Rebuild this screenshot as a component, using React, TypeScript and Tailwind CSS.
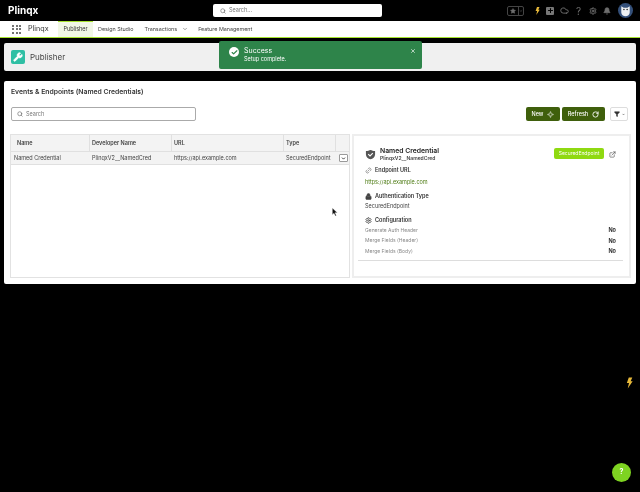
import type { ReactNode } from "react";
import { Search, Check, X, ChevronDown, Star, Plus, Cloud, Settings, Bell, Link2, Lock, ExternalLink, RotateCw, Filter, Wrench, Sparkle } from "lucide-react";

const F = "font-['Inter',sans-serif]";

function Bolt({ className }: { className: string }) {
  return (
    <svg viewBox="0 0 10 16" className={className} fill="#e8b93a">
      <path d="M4 0h5L6.600 5.500H9.500L2.500 16l1.800-8H1.200z" />
    </svg>
  );
}

function Owl() {
  return (
    <svg viewBox="0 0 16 16" className="w-[15px] h-[15px]">
      <circle cx="8" cy="8" r="8" fill="#34507a" />
      <path d="M3.500 3.500l2.500 1.500h4l2.500-1.500v6.500c0 2.200-2.200 4.200-4.500 4.200S3.500 12.200 3.500 10z" fill="#eef0f2" />
      <circle cx="6.300" cy="7" r="0.800" fill="#222" />
      <circle cx="9.700" cy="7" r="0.800" fill="#222" />
    </svg>
  );
}

function TopBar() {
  return (
    <header className="h-[21px] bg-black flex items-center pl-2 pr-[7px] shrink-0">
      <span className="text-white font-bold text-[10px] w-[205px]">Plinqx</span>
      <div className="w-[169px] h-[13px] bg-white rounded-[2px] flex items-center pl-[7px] gap-[3px]">
        <Search className="w-[6px] h-[6px] text-[#666]" strokeWidth={2.500} />
        <span className="text-[5.500px] text-[#777]">Search...</span>
      </div>
      <div className="ml-auto flex items-center">
        <div className="w-[17px] h-[10px] border border-[#444] rounded-[2px] flex items-center">
          <div className="w-[11px] flex justify-center border-r border-[#444] h-full items-center">
            <Star className="w-[6px] h-[6px] text-[#6e6e6e] fill-[#6e6e6e]" />
          </div>
          <ChevronDown className="w-[4px] h-[4px] text-[#6e6e6e] ml-[0.500px]" strokeWidth={3} />
        </div>
        <Bolt className="w-[5px] h-[8px] ml-[11px]" />
        <div className="w-[8px] h-[8px] bg-[#777] rounded-[1px] ml-[6px] flex items-center justify-center">
          <Plus className="w-[7px] h-[7px] text-black" strokeWidth={3.500} />
        </div>
        <Cloud className="w-[9px] h-[9px] text-[#6e6e6e] ml-[6px]" strokeWidth={2.500} />
        <span className="text-[10px] leading-none text-[#6e6e6e] ml-[7px] w-[6px]">?</span>
        <Settings className="w-[8px] h-[8px] text-[#6e6e6e] ml-[7px]" strokeWidth={3} />
        <Bell className="w-[8px] h-[8px] text-[#6e6e6e] fill-[#6e6e6e] ml-[6px]" />
        <div className="ml-[7px]"><Owl /></div>
      </div>
    </header>
  );
}

function NavBar() {
  const dots = Array.from({ length: 9 });
  return (
    <nav className="h-[17px] bg-white border-b-[1.500px] border-[#a6e22e] flex items-stretch shrink-0">
      <div className="grid grid-cols-3 gap-[1.500px] w-[9px] h-[9px] ml-[12px] self-center">
        {dots.map((_, i) => (
          <span key={i} className="w-[2px] h-[2px] bg-[#444] rounded-full" />
        ))}
      </div>
      <span className="ml-[7px] text-[7.200px] text-[#333] self-center w-[30px]">Plinqx</span>
      <div className="w-[35px] bg-[#f1f7e6] border-t border-[#a6e22e] flex items-center justify-center text-[5.500px] text-[#333]">
        Publisher
      </div>
      <div className="ml-[5px] flex items-center text-[5.400px] text-[#444]">
        <span>Design Studio</span>
        <span className="ml-[11px]">Transactions</span>
        <ChevronDown className="w-[6px] h-[6px] ml-[5px]" />
        <span className="ml-[10px]">Feature Management</span>
      </div>
    </nav>
  );
}

function PageHeader() {
  return (
    <section className="h-[28px] mx-1 mt-[5px] bg-[#f0f0f0] rounded-[2px] flex items-center pl-[7px] shrink-0">
      <div className="w-[14px] h-[14px] bg-[#2fbfa4] rounded-[2px] flex items-center justify-center">
        <Wrench className="w-[10px] h-[10px] text-white fill-white" />
      </div>
      <span className="ml-[5px] text-[8px] text-[#444]">Publisher</span>
    </section>
  );
}

function Toolbar() {
  return (
    <div className="flex items-center mt-[11px] pl-[7px] pr-2">
      <div className="w-[185px] h-[14px] border border-[#aaa] rounded-[2px] flex items-center pl-[5px] gap-[3px]">
        <Search className="w-[6px] h-[6px] text-[#666]" strokeWidth={2.500} />
        <span className="text-[5.500px] text-[#777]">Search</span>
      </div>
      <button className="ml-auto w-[34px] h-[14px] bg-[#3f5f0c] rounded-[2px] flex items-center justify-center gap-[4px] text-white text-[5.500px] font-medium">
        New <Sparkle className="w-[7px] h-[7px]" />
      </button>
      <button className="ml-[2px] w-[43px] h-[14px] bg-[#3f5f0c] rounded-[2px] flex items-center justify-center gap-[4px] text-white text-[5.500px] font-medium">
        Refresh <RotateCw className="w-[7px] h-[7px]" strokeWidth={3} />
      </button>
      <div className="ml-[5px] w-[18px] h-[14px] border border-[#ddd] rounded-[2px] flex items-center justify-center gap-[2px]">
        <Filter className="w-[6px] h-[6px] text-[#333] fill-[#333]" />
        <ChevronDown className="w-[3px] h-[3px] text-[#333]" strokeWidth={4} />
      </div>
    </div>
  );
}

function Table() {
  const cols = "grid grid-cols-[79px_82px_112px_52px_15px]";
  const head = ["Name", "Developer Name", "URL", "Type", ""];
  return (
    <div className="w-[340px] border border-[#e2e2e2] shrink-0">
      <div className={`${cols} h-[17px] bg-[#f3f3f3] border-b border-[#e0e0e0] text-[5.500px] font-semibold text-[#444]`}>
        {head.map((h, i) => (
          <div key={i} className={`flex items-center ${i < 4 ? "border-r border-[#e0e0e0]" : ""} ${i === 0 ? "pl-[6px]" : "pl-[2px]"}`}>
            {h}
          </div>
        ))}
      </div>
      <div className={`${cols} h-[13px] bg-[#f3f3f3] border-b border-[#e0e0e0] text-[5.500px] text-[#444]`}>
        <div className="flex items-center pl-[3px]">Named Credential</div>
        <div className="flex items-center pl-[2px]">PlinqxV2__NamedCred</div>
        <div className="flex items-center pl-[2px]">https://api.example.com</div>
        <div className="flex items-center pl-[2px]">SecuredEndpoint</div>
        <div className="flex items-center justify-center">
          <div className="w-[9px] h-[8px] bg-white border border-[#999] rounded-[1px] flex items-center justify-center">
            <ChevronDown className="w-[5px] h-[5px] text-[#222]" strokeWidth={4} />
          </div>
        </div>
      </div>
    </div>
  );
}

function Field({ label }: { label: string }) {
  return (
    <div className="flex justify-between items-center h-[10.500px] text-[5px] text-[#888] pr-px">
      <span>{label}</span>
      <span className="text-[5.500px] font-bold text-[#333]">No</span>
    </div>
  );
}

function Label({ icon, text, top }: { icon: ReactNode; text: string; top: string }) {
  return (
    <div className={`flex items-center gap-[3px] h-[8px] ${top} text-[5.500px] font-semibold text-[#333]`}>
      <span className="w-[7px] flex justify-center">{icon}</span>
      {text}
    </div>
  );
}

function Detail() {
  return (
    <div className="ml-[2px] flex-1 border-2 border-[#eee] pl-[4px] pr-[6px] pt-[12px] text-[#333]">
      <div className="flex items-center pl-[7px] pr-[7px] h-[13px]">
        <svg viewBox="0 0 12 12" className="w-[11px] h-[11px] shrink-0">
          <path d="M1 2.200C3 2.200 4.500 1.500 6 1c1.500.5 3 1.200 5 1.200V6c0 3-2.500 4.500-5 5.300C3.500 10.500 1 9 1 6z" fill="#555" />
          <path d="M3.500 5.500L5.500 7.500 8.500 4.500" stroke="#fff" strokeWidth="1.200" fill="none" />
        </svg>
        <div className="ml-[4px] leading-none">
          <div className="text-[6.800px] font-semibold text-[#222]">Named Credential</div>
          <div className="text-[5px] font-semibold text-[#444] mt-[1px]">PlinqxV2__NamedCred</div>
        </div>
        <span className="ml-auto mb-[2px] h-[11px] w-[50px] bg-[#8fd911] rounded-[2px] text-white text-[5px] flex items-center justify-center">
          SecuredEndpoint
        </span>
        <ExternalLink className="w-[7px] h-[7px] ml-[5px] text-[#444]" />
      </div>
      <div className="pl-[7px] pr-[6px]">
        <Label top="mt-[5px]" text="Endpoint URL" icon={<Link2 className="w-[7px] h-[7px] text-[#666] -rotate-45" />} />
        <div className="mt-[4px] h-[8px] leading-[8px] text-[5.500px] text-[#4c7a12]">https://api.example.com</div>
        <Label top="mt-[6px]" text="Authentication Type" icon={<Lock className="w-[7px] h-[7px] fill-[#444] text-[#444]" />} />
        <div className="mt-[2px] h-[8px] leading-[8px] text-[5.500px] text-[#444]">SecuredEndpoint</div>
        <Label top="mt-[6px]" text="Configuration" icon={<Settings className="w-[7px] h-[7px] text-[#555]" strokeWidth={3} />} />
        <div className="mt-[1px]">
          <Field label="Generate Auth Header" />
          <Field label="Merge Fields (Header)" />
          <Field label="Merge Fields (Body)" />
        </div>
      </div>
      <div className="mt-[3px] border-t border-[#ddd]" />
    </div>
  );
}

export default function App() {
  return (
    <div className={`relative w-[640px] h-[492px] overflow-hidden bg-black flex flex-col ${F} blur-[0.35px]`}>
      <TopBar />
      <NavBar />
      <PageHeader />
      <main className="h-[203px] mx-1 mt-[10px] bg-white rounded-[2px] flex flex-col shrink-0">
        <h2 className="mt-[6px] ml-[7px] text-[6.800px] leading-[9px] font-semibold text-[#333]">
          Events &amp; Endpoints (Named Credentials)
        </h2>
        <Toolbar />
        <div className="flex h-[144px] mt-[13px] mx-[6px] mr-[5px]">
          <Table />
          <Detail />
        </div>
      </main>

      {/* overlays */}
      <div className="absolute left-[219px] top-[41px] w-[203px] h-[28px] bg-[#2e844a] rounded-[2px] flex items-start pl-[10px] pt-[6px] text-white">
        <div className="w-[10px] h-[10px] rounded-full bg-white flex items-center justify-center">
          <Check className="w-[7px] h-[7px] text-[#2e844a]" strokeWidth={4} />
        </div>
        <div className="ml-[5px] leading-none">
          <div className="text-[7px]">Success</div>
          <div className="text-[5.500px] mt-[3px]">Setup complete.</div>
        </div>
        <X className="absolute right-[6px] top-[7px] w-[6px] h-[6px]" strokeWidth={2.500} />
      </div>
      <svg viewBox="0 0 8 12" className="absolute left-[332px] top-[208px] w-[6px] h-[8px]">
        <path d="M0 0v10l2.500-2.200L4.500 12l1.500-.8L4 7h3.500z" fill="#111" stroke="#fff" strokeWidth="0.500" />
      </svg>
      <Bolt className="absolute left-[626px] top-[376px] w-[7px] h-[14px]" />
      <div className="absolute left-[612px] top-[463px] w-[19px] h-[19px] rounded-full bg-[#7ed321] flex items-center justify-center text-white text-[7px] font-bold">
        ?
      </div>
    </div>
  );
}
